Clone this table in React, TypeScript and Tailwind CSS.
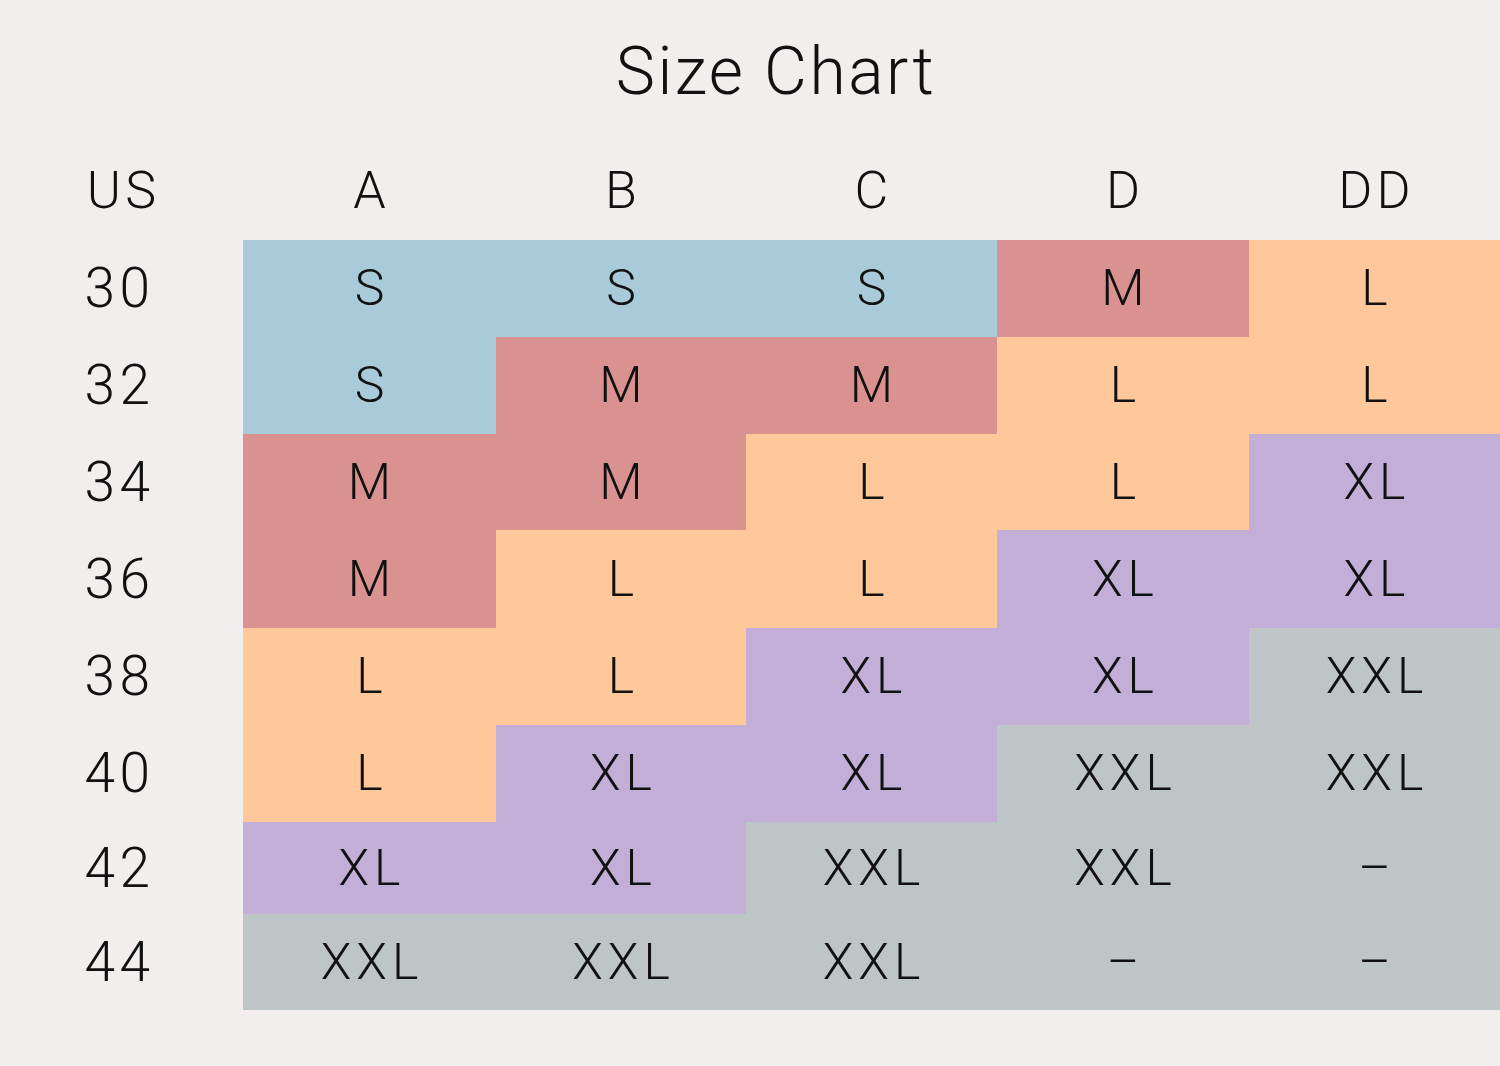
import React from "react";

const B = "bg-[#a9cad9]";
const R = "bg-[#d99290]";
const O = "bg-[#fec89a]";
const P = "bg-[#c3aed8]";
const G = "bg-[#bec5c6]";

const rows: { us: string; h: string; cells: [string, string][] }[] = [
  { us: "30", h: "h-[97px]", cells: [["S", B], ["S", B], ["S", B], ["M", R], ["L", O]] },
  { us: "32", h: "h-[97px]", cells: [["S", B], ["M", R], ["M", R], ["L", O], ["L", O]] },
  { us: "34", h: "h-[96px]", cells: [["M", R], ["M", R], ["L", O], ["L", O], ["XL", P]] },
  { us: "36", h: "h-[98px]", cells: [["M", R], ["L", O], ["L", O], ["XL", P], ["XL", P]] },
  { us: "38", h: "h-[97px]", cells: [["L", O], ["L", O], ["XL", P], ["XL", P], ["XXL", G]] },
  { us: "40", h: "h-[97px]", cells: [["L", O], ["XL", P], ["XL", P], ["XXL", G], ["XXL", G]] },
  { us: "42", h: "h-[92px]", cells: [["XL", P], ["XL", P], ["XXL", G], ["XXL", G], ["–", G]] },
  { us: "44", h: "h-[96px]", cells: [["XXL", G], ["XXL", G], ["XXL", G], ["–", G], ["–", G]] },
];

const heads = ["A", "B", "C", "D", "DD"];

export default function App() {
  return (
    <div
      className="w-[1500px] h-[1066px] bg-[#f2eeed] text-[#111] overflow-hidden"
      style={{ fontFamily: "Roboto, 'Liberation Sans', sans-serif" }}
    >
      <div className="h-[150px] pl-[52px] pt-[39px] text-center text-[66px] leading-none font-light tracking-[2.5px]">
        Size Chart
      </div>
      <div className="grid grid-cols-[243px_253px_250px_251px_252px_251px]">
        <div className="h-[90px] pb-[8px] pl-[4px] flex items-center justify-center text-[52px] font-light tracking-[0.08em]">US</div>
        {heads.map((h) => (
          <div key={h} className="h-[90px] pb-[8px] pl-[4px] flex items-center justify-center text-[52px] font-light tracking-[0.08em]">
            {h}
          </div>
        ))}
        {rows.map((r) => (
          <React.Fragment key={r.us}>
            <div className={`${r.h} flex items-center justify-center pr-[4px] text-[55px] font-light tracking-[0.08em]`}>{r.us}</div>
            {r.cells.map(([t, c], i) => (
              <div key={i} className={`${r.h} ${c} pl-[5px] flex items-center justify-center text-[50px] font-light tracking-[0.1em]`}>
                {t}
              </div>
            ))}
          </React.Fragment>
        ))}
      </div>
    </div>
  );
}
